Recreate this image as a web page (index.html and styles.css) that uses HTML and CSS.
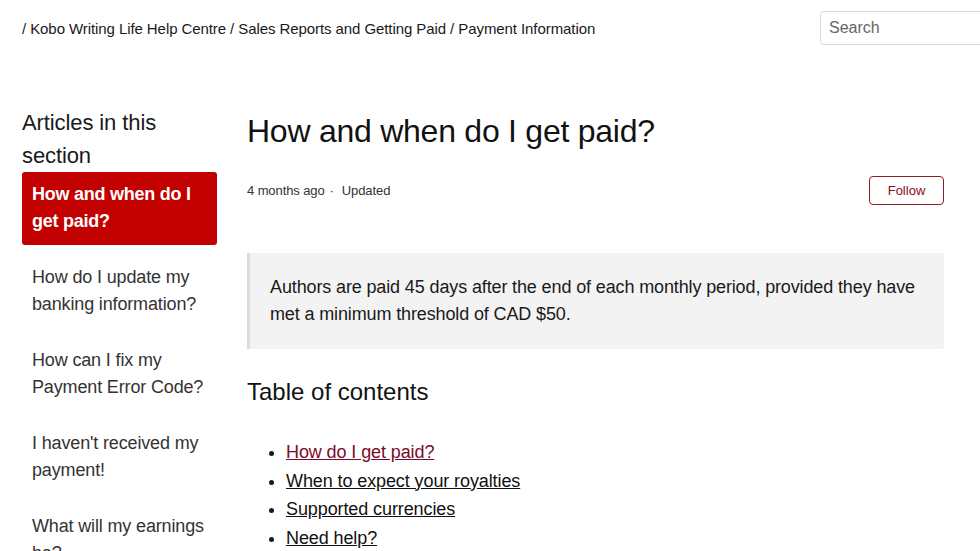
FILE: index.html
```html
<!DOCTYPE html>
<html lang="en">
<head>
<meta charset="utf-8">
<title>How and when do I get paid?</title>
<link rel="stylesheet" href="styles.css">
</head>
<body>
<header class="topbar">
  <nav class="breadcrumbs">/ <a href="#">Kobo Writing Life Help Centre</a> / <a href="#">Sales Reports and Getting Paid</a> / <a href="#">Payment Information</a></nav>
  <input class="search" type="search" placeholder="Search">
</header>
<div class="page">
  <aside class="sidebar">
    <h2 class="sidebar-title">Articles in this section</h2>
    <ul class="article-list">
      <li><a class="article-link active" href="#">How and when do I get paid?</a></li>
      <li><a class="article-link" href="#">How do I update my banking information?</a></li>
      <li><a class="article-link" href="#">How can I fix my Payment Error Code?</a></li>
      <li><a class="article-link" href="#">I haven't received my payment!</a></li>
      <li><a class="article-link" href="#">What will my earnings be?</a></li>
    </ul>
  </aside>
  <main class="article">
    <h1 class="article-title">How and when do I get paid?</h1>
    <div class="meta-row">
      <div class="meta"><span>4 months ago</span><span class="dot">·</span><span>Updated</span></div>
      <button class="follow">Follow</button>
    </div>
    <blockquote class="summary">Authors are paid 45 days after the end of each monthly period, provided they have met a minimum threshold of CAD $50.</blockquote>
    <h2 class="toc-title">Table of contents</h2>
    <ul class="toc">
      <li><a class="visited" href="#">How do I get paid?</a></li>
      <li><a href="#">When to expect your royalties</a></li>
      <li><a href="#">Supported currencies</a></li>
      <li><a href="#">Need help?</a></li>
    </ul>
  </main>
</div>
</body>
</html>
```

FILE: styles.css
```css
html, body {
  margin: 0;
  padding: 0;
  overflow: hidden;
  background: #fff;
}
body {
  font-family: "Liberation Sans", Arial, sans-serif;
  color: #1a1a1a;
  width: 980px;
  height: 551px;
}
a { color: inherit; text-decoration: none; }

.topbar {
  height: 56px;
  display: flex;
  align-items: center;
  padding-left: 22px;
  box-sizing: border-box;
}
.breadcrumbs {
  flex: 1;
  font-size: 15px;
  letter-spacing: -0.08px;
  color: #1a1a1a;
}
.search {
  width: 190px;
  height: 34px;
  box-sizing: border-box;
  margin-right: -30px;
  border: 1px solid #d6d6d6;
  border-radius: 4px;
  padding: 0 8px;
  font-family: "Liberation Sans", Arial, sans-serif;
  font-size: 16px;
  color: #333;
  outline: none;
}
.search::placeholder { color: #666; }

.page {
  display: flex;
  gap: 30px;
  padding-left: 22px;
}
.sidebar {
  width: 195px;
  flex: none;
}
.sidebar-title {
  margin: 50px 0 0;
  font-size: 22px;
  line-height: 33px;
  letter-spacing: -0.1px;
  font-weight: normal;
  color: #1a1a1a;
}
.article-list {
  list-style: none;
  margin: 0;
  padding: 0;
}
.article-list li + li { margin-top: 10px; }
.article-link {
  display: block;
  padding: 9px 10px 10px;
  font-size: 18px;
  line-height: 27px;
  letter-spacing: -0.15px;
  color: #333;
  border-radius: 3px;
}
.article-link.active {
  background: #c20000;
  color: #fff;
  font-weight: bold;
  letter-spacing: -0.25px;
}

.article {
  width: 697px;
  flex: none;
}
.article-title {
  margin: 55px 0 0;
  font-size: 32px;
  line-height: 40px;
  letter-spacing: -0.25px;
  font-weight: normal;
  color: #111;
}
.meta-row {
  margin-top: 25px;
  display: flex;
  justify-content: space-between;
  align-items: center;
}
.meta {
  font-size: 13px;
  color: #333;
  display: flex;
  gap: 5px;
  letter-spacing: -0.1px;
}
.dot { margin-right: 3px; }
.follow {
  width: 75px;
  height: 29px;
  border: 1px solid #8e1b24;
  border-radius: 4px;
  background: #fff;
  color: #8e0c18;
  font-family: "Liberation Sans", Arial, sans-serif;
  font-size: 13px;
  padding: 0;
}
.summary {
  margin: 48px 0 0;
  background: #f3f3f3;
  border-left: 3px solid #dcdcdc;
  padding: 21px 20px;
  font-size: 18px;
  line-height: 27px;
  letter-spacing: -0.13px;
  color: #1a1a1a;
  border-radius: 0 3px 3px 0;
}
.toc-title {
  margin: 26px 0 0;
  font-size: 24px;
  line-height: 33px;
  font-weight: normal;
  color: #111;
}
.toc {
  margin: 30px 0 0;
  padding-left: 39px;
  font-size: 18px;
  line-height: 28.5px;
  letter-spacing: -0.1px;
}
.toc a {
  text-decoration: underline;
  color: #111;
}
.toc a.visited { color: #7b0a2a; }
```
